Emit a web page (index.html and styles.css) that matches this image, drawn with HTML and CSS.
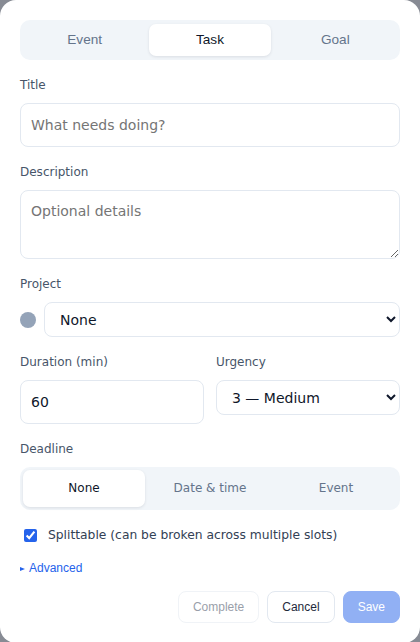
FILE: index.html
```html
<!DOCTYPE html>
<html lang="en">
<head>
<meta charset="utf-8">
<title>New Task</title>
<link rel="stylesheet" href="styles.css">
</head>
<body>
<div class="modal">
  <div class="seg seg-top">
    <button class="seg-btn">Event</button>
    <button class="seg-btn active">Task</button>
    <button class="seg-btn">Goal</button>
  </div>

  <div class="field">
    <label class="label">Title</label>
    <input class="input" type="text" placeholder="What needs doing?">
  </div>

  <div class="field">
    <label class="label">Description</label>
    <textarea class="input textarea" placeholder="Optional details"></textarea>
  </div>

  <div class="field">
    <label class="label">Project</label>
    <div class="project-row">
      <span class="dot"></span>
      <select class="select">
        <option>None</option>
      </select>
    </div>
  </div>

  <div class="two-col">
    <div class="field">
      <label class="label">Duration (min)</label>
      <input class="input" type="text" value="60">
    </div>
    <div class="field">
      <label class="label">Urgency</label>
      <select class="select">
        <option>3 — Medium</option>
      </select>
    </div>
  </div>

  <div class="field">
    <label class="label">Deadline</label>
    <div class="seg seg-deadline">
      <button class="dl-btn active">None</button>
      <button class="dl-btn">Date &amp; time</button>
      <button class="dl-btn">Event</button>
    </div>
  </div>

  <label class="check-row">
    <input type="checkbox" checked>
    <span>Splittable (can be broken across multiple slots)</span>
  </label>

  <details class="advanced">
    <summary>Advanced</summary>
  </details>

  <div class="actions">
    <button class="btn btn-ghost" disabled>Complete</button>
    <button class="btn btn-outline">Cancel</button>
    <button class="btn btn-primary" disabled>Save</button>
  </div>
</div>
</body>
</html>
```

FILE: styles.css
```css
html, body {
  margin: 0;
  padding: 0;
}

body {
  background: #878b94;
  font-family: "DejaVu Sans", sans-serif;
  color: #0f172a;
}

.modal {
  width: 420px;
  box-sizing: border-box;
  background: #ffffff;
  border-radius: 16px;
  padding: 20px;
  display: flex;
  flex-direction: column;
  gap: 16px;
}

.seg {
  display: grid;
  grid-template-columns: 1fr 1fr 1fr;
  gap: 4px;
  background: #f1f5f9;
  border-radius: 10px;
}

.seg-top {
  padding: 4px;
}

.seg-deadline {
  padding: 3px;
}

.seg-btn {
  border: 0;
  background: transparent;
  border-radius: 7px;
  font-family: "Liberation Sans", Arial, sans-serif;
  font-size: 13.6px;
  line-height: 16px;
  padding: 8px 0;
  color: #64748b;
  margin: 0;
}

.dl-btn {
  border: 0;
  background: transparent;
  border-radius: 7px;
  font-family: "DejaVu Sans", sans-serif;
  font-size: 12px;
  line-height: 17.4px;
  padding: 10px 0;
  color: #64748b;
  margin: 0;
}

.seg-btn.active,
.dl-btn.active {
  background: #ffffff;
  color: #0f172a;
  box-shadow: 0 1px 3px rgba(15, 23, 42, 0.1);
}

.field {
  display: flex;
  flex-direction: column;
}

.label {
  font-size: 12px;
  line-height: 18px;
  color: #475569;
  margin-bottom: 9px;
}

.input {
  box-sizing: border-box;
  width: 100%;
  height: 43.5px;
  border: 1px solid #e2e8f0;
  border-radius: 8px;
  padding: 10px;
  font-family: "DejaVu Sans", sans-serif;
  font-size: 14px;
  line-height: 21.5px;
  color: #0f172a;
  background: #ffffff;
  margin: 0;
  outline: none;
}

.input::placeholder {
  color: #757575;
}

.textarea {
  height: 69.5px;
  resize: vertical;
  display: block;
}

.select {
  box-sizing: border-box;
  width: 100%;
  height: 35px;
  border: 1px solid #e2e8f0;
  border-radius: 8px;
  padding: 0 6px 0 11px;
  font-family: "DejaVu Sans", sans-serif;
  font-size: 14px;
  color: #0f172a;
  background: #ffffff;
  margin: 0;
}

.project-row {
  display: flex;
  align-items: center;
  gap: 8px;
}

.dot {
  width: 16px;
  height: 16px;
  border-radius: 50%;
  background: #94a3b8;
  flex: none;
}

.two-col {
  display: grid;
  grid-template-columns: 1fr 1fr;
  gap: 12px;
  align-items: start;
}

.check-row {
  display: flex;
  align-items: center;
  gap: 8px;
  font-size: 12.3px;
  line-height: 18px;
  color: #334155;
}

.check-row input {
  margin: 3px 3px 3px 4px;
  accent-color: #2563eb;
}

.advanced summary {
  display: block;
  list-style: none;
  font-family: "Liberation Sans", Arial, sans-serif;
  font-size: 12px;
  line-height: 14px;
  color: #2563eb;
  cursor: pointer;
}

.advanced summary::-webkit-details-marker {
  display: none;
}

.advanced summary::before {
  content: "";
  display: inline-block;
  width: 0;
  height: 0;
  border-left: 5px solid #2563eb;
  border-top: 2.5px solid transparent;
  border-bottom: 2.5px solid transparent;
  margin-right: 4px;
  vertical-align: 1px;
}

.actions {
  display: flex;
  justify-content: flex-end;
  gap: 8px;
}

.btn {
  font-family: "Liberation Sans", Arial, sans-serif;
  font-size: 12px;
  line-height: 14px;
  padding: 8px 14px;
  border-radius: 8px;
  border: 1px solid #e2e8f0;
  background: #ffffff;
  color: #1e293b;
  margin: 0;
}

.btn-ghost {
  opacity: 0.5;
  color: #334155;
}

.btn-primary {
  background: #2563eb;
  border-color: #2563eb;
  color: #ffffff;
  opacity: 0.5;
}
```
